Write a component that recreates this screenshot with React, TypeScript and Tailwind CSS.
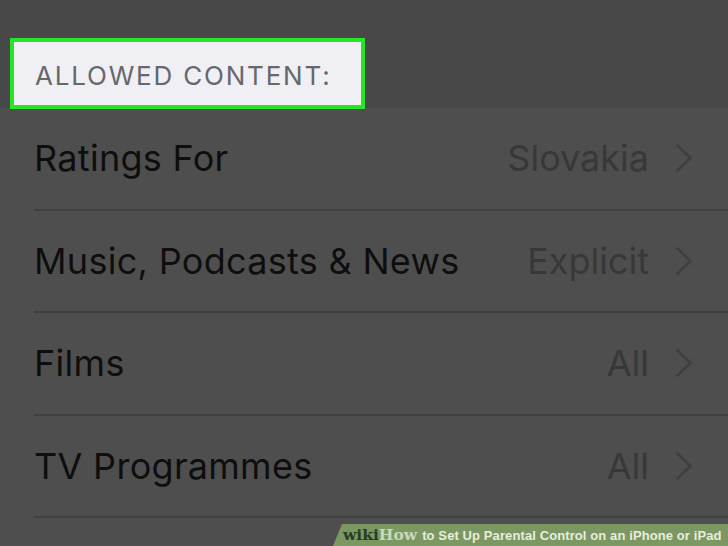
import React from "react";

/* ===================== DATA ===================== */

interface Row {
    label: string;
    value: string;
}

const rows: Row[] = [
    { label: "Ratings For", value: "Slovakia" },
    { label: "Music, Podcasts & News", value: "Explicit" },
    { label: "Films", value: "All" },
    { label: "TV Programmes", value: "All" },
];

/* ===================== PARTS ===================== */

const Chevron: React.FC = () => (
    <svg width="18" height="30" viewBox="0 0 18 30" fill="none" className="shrink-0">
        <path d="M2.5 2.5 L15.5 15 L2.5 27.5" stroke="#3f3f3f" strokeWidth="2.6" strokeLinecap="round" strokeLinejoin="round" />
    </svg>
);

const SettingRow: React.FC<Row> = ({ label, value }) => (
    <div className="h-[102.5px] pl-[34px]">
        <div className="h-full flex items-center border-b-2 border-[#404040] pr-[35px]">
            <span className="flex-1 text-[36px] text-[#0e0e0e] tracking-[0.3px]">{label}</span>
            <span className="text-[36px] text-[#383838] mr-[26px]">{value}</span>
            <Chevron />
        </div>
    </div>
);

const Watermark: React.FC = () => (
    <div className="absolute right-0 bottom-0 h-[22px] w-[395px] bg-[#7b9862] flex items-center pl-[10px] [clip-path:polygon(9px_0,100%_0,100%_100%,0_100%)]">
        <span className="text-[15.5px] font-bold text-[#2b3a27] leading-none" style={{ fontFamily: '"DejaVu Serif", "Liberation Serif", serif' }}>wiki</span>
        <span className="text-[15.5px] font-bold text-[#c9d8b9] leading-none" style={{ fontFamily: '"DejaVu Serif", "Liberation Serif", serif' }}>How</span>
        <span className="ml-[5px] text-[13px] font-bold text-[#e6eedd] leading-none whitespace-nowrap tracking-[0.1px]" style={{ fontFamily: '"Liberation Sans", Arial, sans-serif' }}>to Set Up Parental Control on an iPhone or iPad</span>
    </div>
);

/* ===================== APP ===================== */

const App: React.FC = () => {
    return (
        <div className="relative w-[728px] h-[546px] overflow-hidden bg-[#4e4e4e]" style={{ fontFamily: 'Inter, "Liberation Sans", sans-serif' }}>
            {/* HEADER */}
            <div className="h-[108px] bg-[#484848] pt-[38px] pl-[10px]">
                <div className="w-[355px] h-[71px] border-[4px] border-[#26e526] bg-[#efeff4] flex items-center pl-[21px] pt-[4px]">
                    <span className="text-[26px] text-[#67676c] tracking-[1.8px]">ALLOWED CONTENT:</span>
                </div>
            </div>

            {/* LIST */}
            <div>
                {rows.map(r => (
                    <SettingRow key={r.label} label={r.label} value={r.value} />
                ))}
            </div>

            <Watermark />
        </div>
    );
};

export default App;
